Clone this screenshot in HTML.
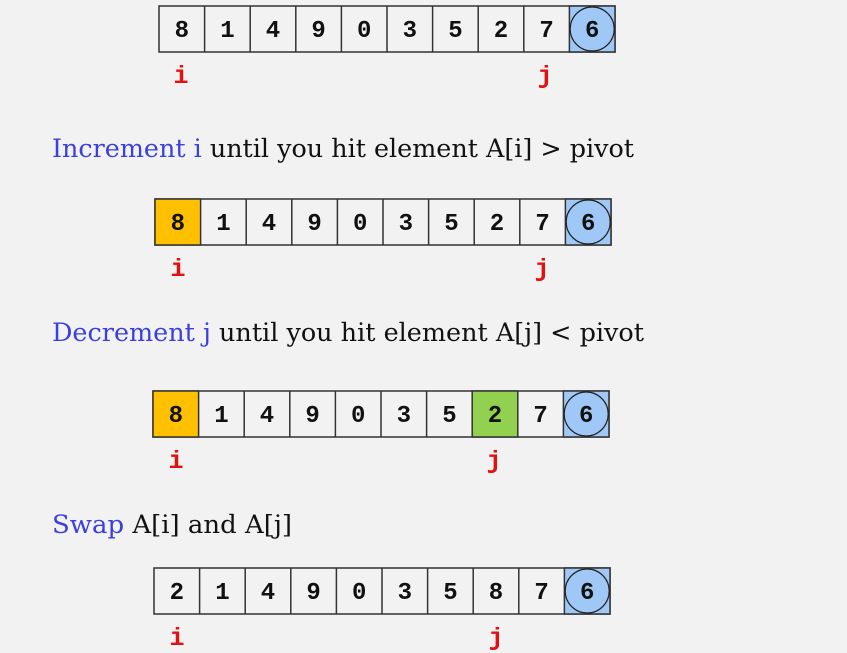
<!DOCTYPE html>
<html><head><meta charset="utf-8"><style>
html,body{margin:0;padding:0;background:#f2f2f2;}
svg{display:block}
.d{font-family:"Liberation Mono",monospace;font-weight:bold;font-size:24px;text-anchor:middle;fill:#111}
.l{font-family:"Liberation Mono",monospace;font-weight:bold;font-size:25px;text-anchor:middle;fill:#e31010}
.t{font-family:"DejaVu Serif","Liberation Serif",serif;font-size:25px;fill:#111}
.b{fill:#3b3fdc}
</style></head><body>
<svg width="847" height="653" viewBox="0 0 847 653" xmlns="http://www.w3.org/2000/svg">
<rect width="847" height="653" fill="#f2f2f2"/>
<g transform="translate(159,6)">
<rect x="0" y="0" width="456" height="46" fill="#f2f2f2" stroke="#333" stroke-width="1.5"/>
<rect x="410.4" y="0" width="45.6" height="46" fill="#9fc8f6" stroke="#333" stroke-width="1.5"/>
<circle cx="433.2" cy="23" r="22" fill="none" stroke="#222" stroke-width="1.2"/>
<g stroke="#333" stroke-width="1.5"><line x1="45.6" y1="0" x2="45.6" y2="46"/><line x1="91.2" y1="0" x2="91.2" y2="46"/><line x1="136.8" y1="0" x2="136.8" y2="46"/><line x1="182.4" y1="0" x2="182.4" y2="46"/><line x1="228" y1="0" x2="228" y2="46"/><line x1="273.6" y1="0" x2="273.6" y2="46"/><line x1="319.2" y1="0" x2="319.2" y2="46"/><line x1="364.8" y1="0" x2="364.8" y2="46"/></g>
<text class="d" y="31"><tspan x="22.8">8</tspan><tspan x="68.4">1</tspan><tspan x="114">4</tspan><tspan x="159.6">9</tspan><tspan x="205.2">0</tspan><tspan x="250.8">3</tspan><tspan x="296.4">5</tspan><tspan x="342">2</tspan><tspan x="387.6">7</tspan><tspan x="433.2">6</tspan></text>
</g>
<text class="l" x="181" y="83">i</text><text class="l" x="545" y="83">j</text>
<text class="t" x="52" y="157" textLength="582" lengthAdjust="spacingAndGlyphs"><tspan class="b">Increment i</tspan> until you hit element A[i] &gt; pivot</text>

<g transform="translate(155,199)">
<rect x="0" y="0" width="456" height="46" fill="#f2f2f2" stroke="#333" stroke-width="1.5"/>
<rect x="0" y="0" width="45.6" height="46" fill="#ffc000" stroke="#333" stroke-width="1.5"/>
<rect x="410.4" y="0" width="45.6" height="46" fill="#9fc8f6" stroke="#333" stroke-width="1.5"/>
<circle cx="433.2" cy="23" r="22" fill="none" stroke="#222" stroke-width="1.2"/>
<g stroke="#333" stroke-width="1.5"><line x1="91.2" y1="0" x2="91.2" y2="46"/><line x1="136.8" y1="0" x2="136.8" y2="46"/><line x1="182.4" y1="0" x2="182.4" y2="46"/><line x1="228" y1="0" x2="228" y2="46"/><line x1="273.6" y1="0" x2="273.6" y2="46"/><line x1="319.2" y1="0" x2="319.2" y2="46"/><line x1="364.8" y1="0" x2="364.8" y2="46"/></g>
<text class="d" y="31"><tspan x="22.8">8</tspan><tspan x="68.4">1</tspan><tspan x="114">4</tspan><tspan x="159.6">9</tspan><tspan x="205.2">0</tspan><tspan x="250.8">3</tspan><tspan x="296.4">5</tspan><tspan x="342">2</tspan><tspan x="387.6">7</tspan><tspan x="433.2">6</tspan></text>
</g>
<text class="l" x="178" y="276">i</text><text class="l" x="542" y="276">j</text>
<text class="t" x="52" y="341" textLength="592" lengthAdjust="spacingAndGlyphs"><tspan class="b">Decrement j</tspan> until you hit element A[j] &lt; pivot</text>

<g transform="translate(153,391)">
<rect x="0" y="0" width="456" height="46" fill="#f2f2f2" stroke="#333" stroke-width="1.5"/>
<rect x="0" y="0" width="45.6" height="46" fill="#ffc000" stroke="#333" stroke-width="1.5"/>
<rect x="319.2" y="0" width="45.6" height="46" fill="#92d050" stroke="#333" stroke-width="1.5"/>
<rect x="410.4" y="0" width="45.6" height="46" fill="#9fc8f6" stroke="#333" stroke-width="1.5"/>
<circle cx="433.2" cy="23" r="22" fill="none" stroke="#222" stroke-width="1.2"/>
<g stroke="#333" stroke-width="1.5"><line x1="91.2" y1="0" x2="91.2" y2="46"/><line x1="136.8" y1="0" x2="136.8" y2="46"/><line x1="182.4" y1="0" x2="182.4" y2="46"/><line x1="228" y1="0" x2="228" y2="46"/><line x1="273.6" y1="0" x2="273.6" y2="46"/></g>
<text class="d" y="31"><tspan x="22.8">8</tspan><tspan x="68.4">1</tspan><tspan x="114">4</tspan><tspan x="159.6">9</tspan><tspan x="205.2">0</tspan><tspan x="250.8">3</tspan><tspan x="296.4">5</tspan><tspan x="342">2</tspan><tspan x="387.6">7</tspan><tspan x="433.2">6</tspan></text>
</g>
<text class="l" x="176" y="468">i</text><text class="l" x="494" y="468">j</text>
<text class="t" x="52" y="533" textLength="240" lengthAdjust="spacingAndGlyphs"><tspan class="b">Swap</tspan> A[i] and A[j]</text>

<g transform="translate(154,568)">
<rect x="0" y="0" width="456" height="46" fill="#f2f2f2" stroke="#333" stroke-width="1.5"/>
<rect x="410.4" y="0" width="45.6" height="46" fill="#9fc8f6" stroke="#333" stroke-width="1.5"/>
<circle cx="433.2" cy="23" r="22" fill="none" stroke="#222" stroke-width="1.2"/>
<g stroke="#333" stroke-width="1.5"><line x1="45.6" y1="0" x2="45.6" y2="46"/><line x1="91.2" y1="0" x2="91.2" y2="46"/><line x1="136.8" y1="0" x2="136.8" y2="46"/><line x1="182.4" y1="0" x2="182.4" y2="46"/><line x1="228" y1="0" x2="228" y2="46"/><line x1="273.6" y1="0" x2="273.6" y2="46"/><line x1="319.2" y1="0" x2="319.2" y2="46"/><line x1="364.8" y1="0" x2="364.8" y2="46"/></g>
<text class="d" y="31"><tspan x="22.8">2</tspan><tspan x="68.4">1</tspan><tspan x="114">4</tspan><tspan x="159.6">9</tspan><tspan x="205.2">0</tspan><tspan x="250.8">3</tspan><tspan x="296.4">5</tspan><tspan x="342">8</tspan><tspan x="387.6">7</tspan><tspan x="433.2">6</tspan></text>
</g>
<text class="l" x="177" y="645">i</text><text class="l" x="496" y="645">j</text>
</svg>
</body></html>
